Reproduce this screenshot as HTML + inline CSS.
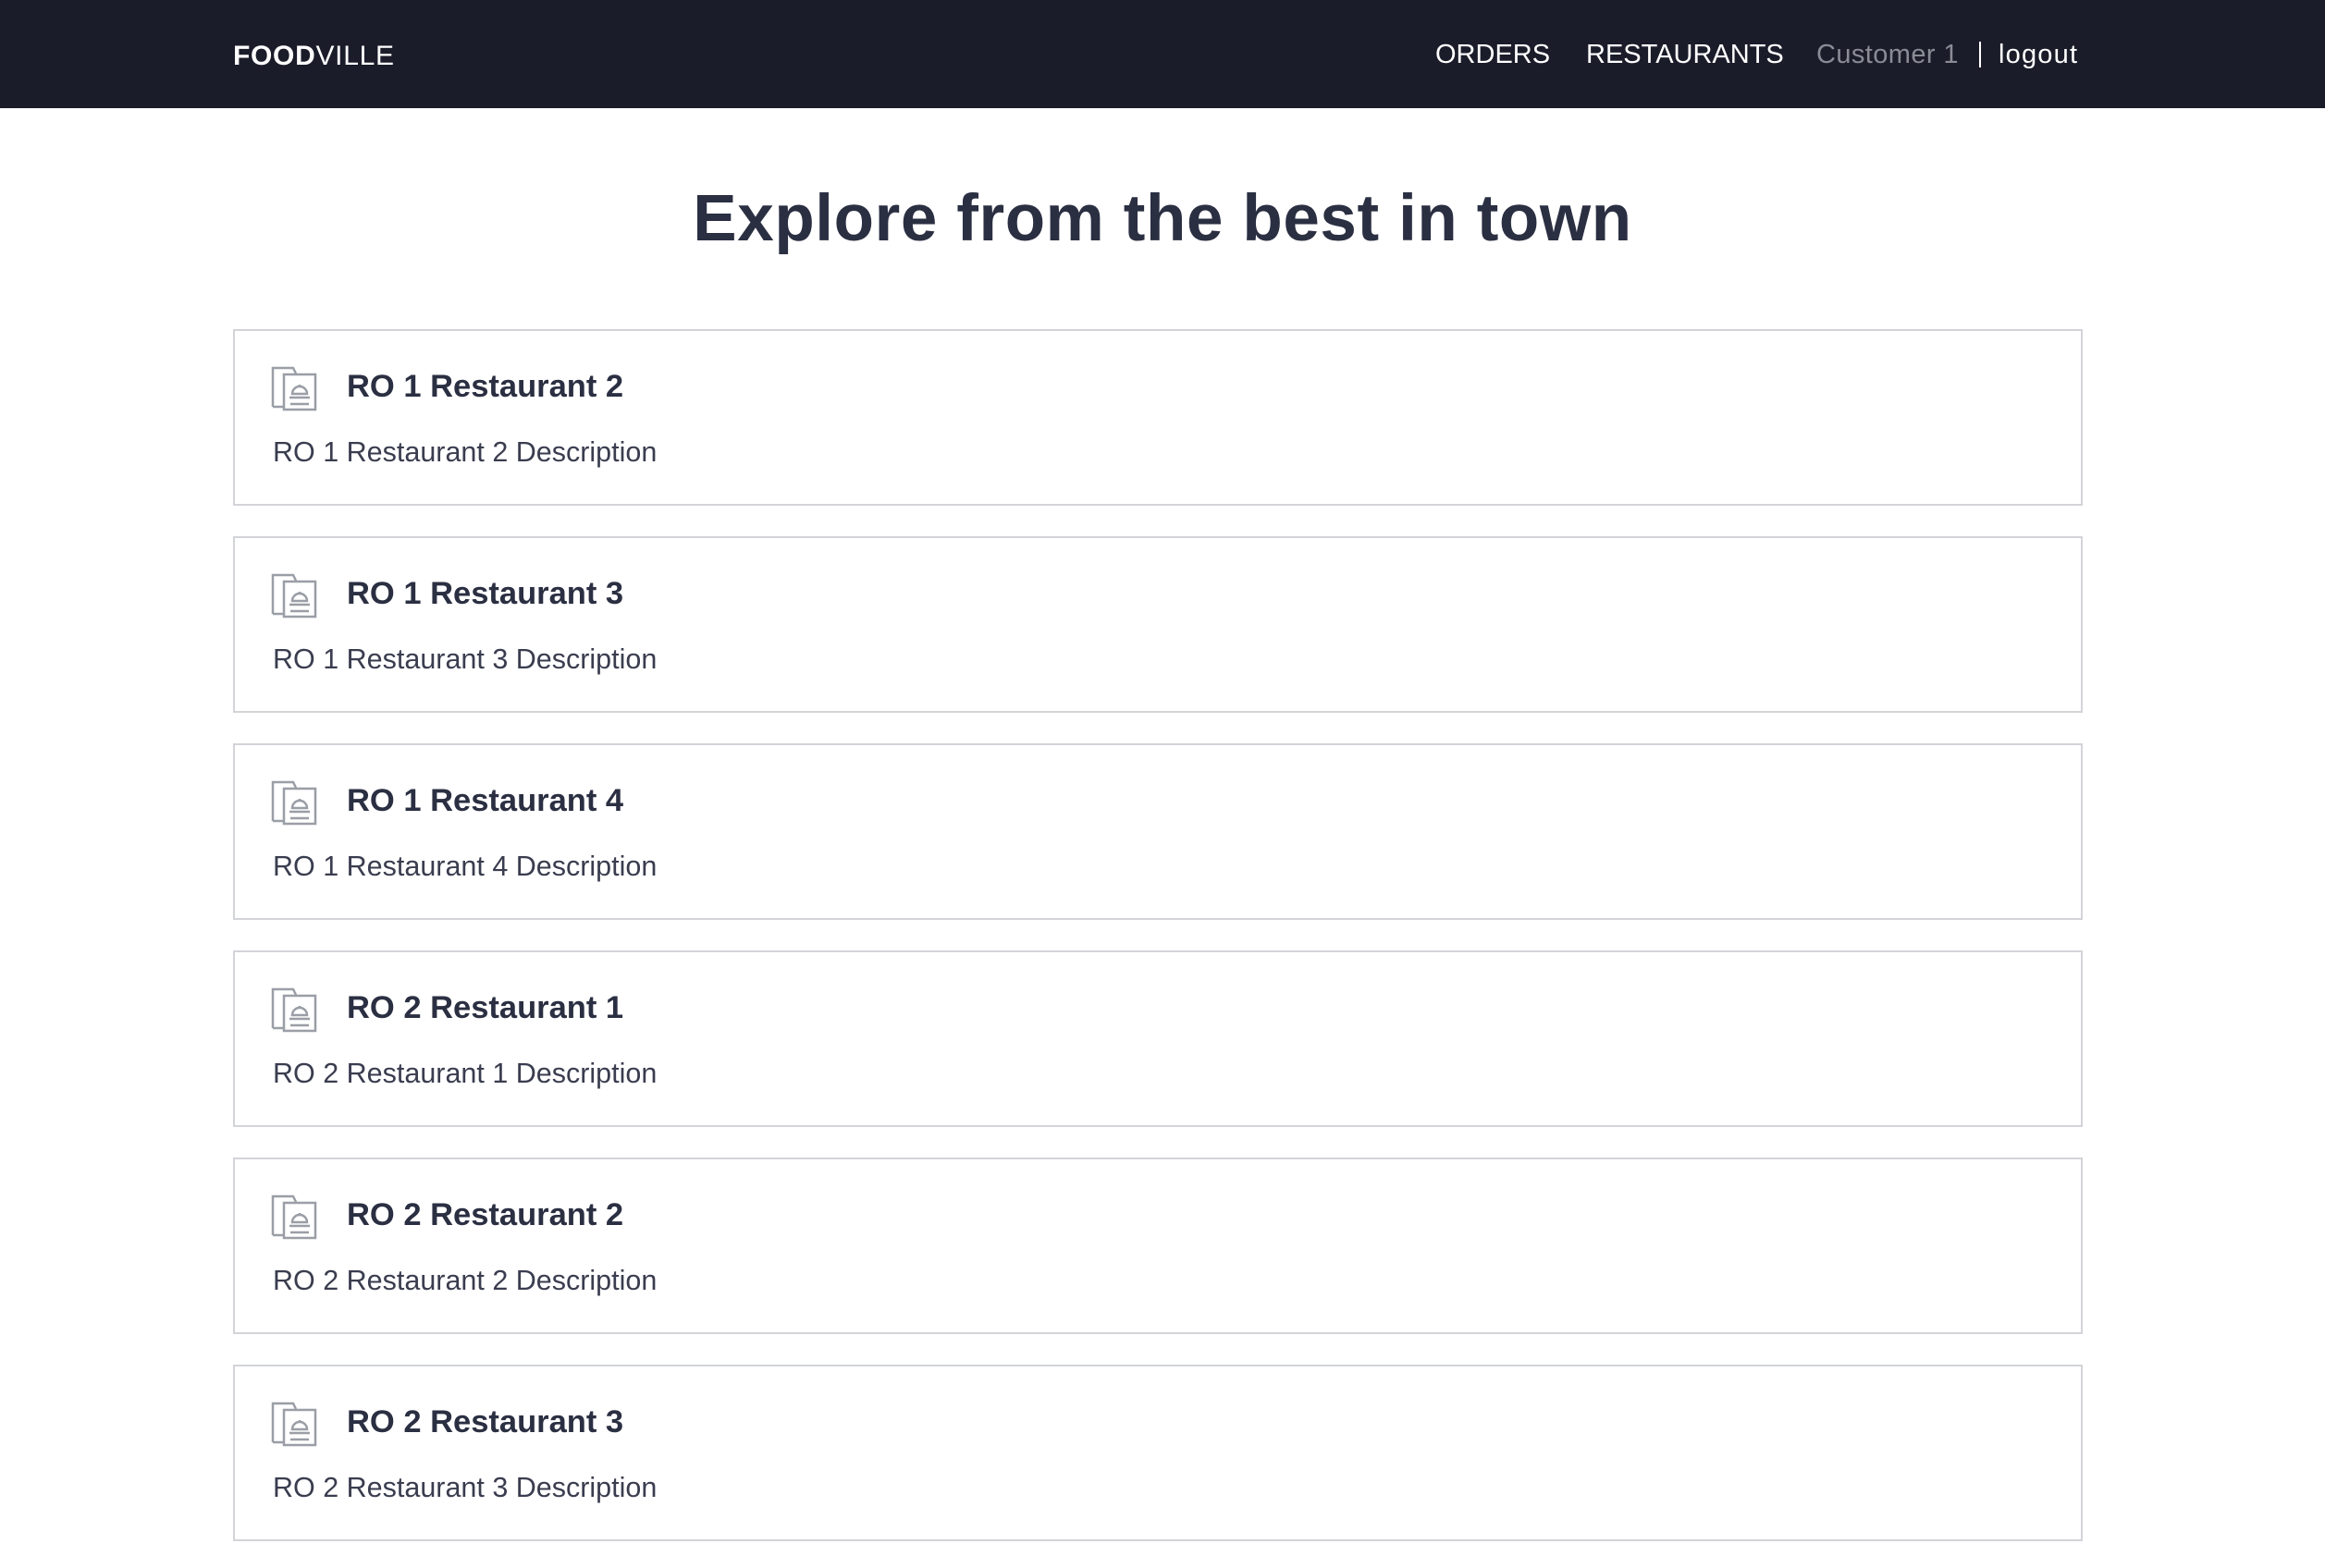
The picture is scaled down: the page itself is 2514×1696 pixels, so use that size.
<!DOCTYPE html>
<html><head><meta charset="utf-8"><style>
*{margin:0;padding:0;box-sizing:border-box}
body{width:2514px;height:1696px;overflow:hidden;background:#fff;font-family:"Liberation Sans",sans-serif;color:#2b2f42}
.hdr{height:117px;background:#1b1c2a;position:relative;color:#fff}
.logo{position:absolute;left:252px;top:44px;font-size:30px;letter-spacing:0.7px}
.logo b{font-weight:700}
.nav{position:absolute;top:43px;font-size:29px;white-space:nowrap}
h1{text-align:center;font-size:71px;font-weight:700;margin-top:84px;height:72px;line-height:72px;letter-spacing:0.6px}
.card{position:absolute;left:252px;width:2000px;height:191px;border:2px solid #d3d4d8}
.card svg{position:absolute;left:39px;top:38px}
.t{position:absolute;left:121px;top:41px;font-size:34.5px;font-weight:700}
.d{position:absolute;left:41px;top:114px;font-size:30.5px;color:#3a3d4f}
</style></head><body>
<div class="hdr">
<div class="logo"><b>FOOD</b>VILLE</div>
<div class="nav" style="left:1552px">ORDERS</div>
<div class="nav" style="left:1715px">RESTAURANTS</div>
<div class="nav" style="left:1964px;color:#8a8c95;letter-spacing:0.4px">Customer 1</div>
<div style="position:absolute;left:2140px;top:45px;width:2px;height:28px;background:#fff"></div>
<div class="nav" style="left:2161px;letter-spacing:1.2px">logout</div>
</div>
<h1>Explore from the best in town</h1>
<div id="cards"></div>
<script>
var n=["RO 1 Restaurant 2","RO 1 Restaurant 3","RO 1 Restaurant 4","RO 2 Restaurant 1","RO 2 Restaurant 2","RO 2 Restaurant 3"];
var ic='<svg width="50" height="50" viewBox="0 0 50 50" fill="none" stroke="#9a9ea6" stroke-width="2.5"><path d="M2 44V2H24L27 8"/><path d="M2 44H13"/><path d="M14 9H48V47H14Z"/><path d="M20 34H42"/><path d="M23 30a8 8 0 0 1 16 0Z"/><path d="M31 20v2"/><path d="M21 41H41"/></svg>';
var h='';n.forEach(function(t,i){h+='<div class="card" style="top:'+(356+i*224)+'px">'+ic+'<div class="t">'+t+'</div><div class="d">'+t+' Description</div></div>';});
document.getElementById('cards').innerHTML=h;
</script>
</body></html>
